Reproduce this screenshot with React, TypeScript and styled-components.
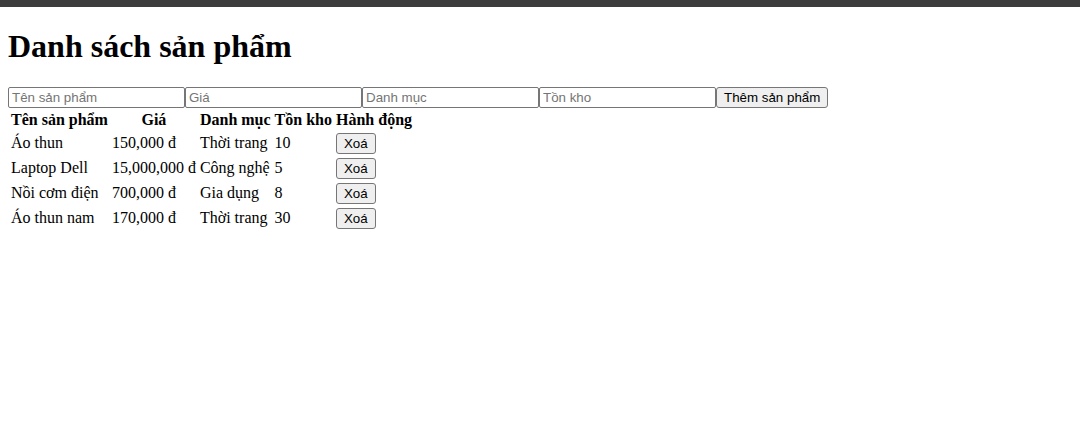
import React from "react";
import styled, { createGlobalStyle } from "styled-components";

const Global = createGlobalStyle`
  html, body { margin: 0; padding: 0; background: #ffffff; }
  body { font-family: "Liberation Serif", "Times New Roman", serif; font-size: 16px; color: #000; }
`;

const TopBar = styled.div`
  height: 7px;
  background: #3c3c3c;
`;

const Page = styled.div`
  padding: 0 8px 8px;
  display: flow-root;
`;

const Title = styled.h1`
  font-size: 32px;
  font-weight: bold;
  margin: 21.44px 0;
  line-height: normal;
`;

const Form = styled.div`
  display: flex;
  align-items: flex-start;
`;

const Field = styled.input`
  box-sizing: border-box;
  width: 177px;
  height: 21px;
  margin: 0;
  padding: 1px 3px;
  border: 1px solid #767676;
  border-radius: 2px;
  font-family: "Liberation Sans", Arial, sans-serif;
  font-size: 13.333px;
  color: #000;
  background: #fff;
  outline: none;
  &::placeholder { color: #757575; }
`;

const Button = styled.button`
  box-sizing: border-box;
  height: 21px;
  margin: 0;
  padding: 1px 7px;
  border: 1px solid #767676;
  border-radius: 3px;
  background: #efefef;
  font-family: "Liberation Sans", Arial, sans-serif;
  font-size: 13.333px;
  color: #000;
  line-height: normal;
  cursor: pointer;
`;

const Table = styled.table`
  border-collapse: separate;
  border-spacing: 2px;
  font-family: "Liberation Serif", "Times New Roman", serif;
  font-size: 16px;
`;

const Th = styled.th`
  padding: 1px;
  font-weight: bold;
  text-align: center;
  white-space: nowrap;
`;

const Td = styled.td`
  padding: 1px;
  text-align: left;
  white-space: nowrap;
  vertical-align: middle;
`;

const products = [
  { name: "Áo thun", price: 150000, category: "Thời trang", stock: 10 },
  { name: "Laptop Dell", price: 15000000, category: "Công nghệ", stock: 5 },
  { name: "Nồi cơm điện", price: 700000, category: "Gia dụng", stock: 8 },
  { name: "Áo thun nam", price: 170000, category: "Thời trang", stock: 30 },
];

const fmt = (n: number) => n.toLocaleString("en-US") + " đ";

export default function App() {
  return (
    <>
      <Global />
      <TopBar />
      <Page>
        <Title>Danh sách sản phẩm</Title>
        <Form>
          <Field placeholder="Tên sản phẩm" />
          <Field placeholder="Giá" />
          <Field placeholder="Danh mục" />
          <Field placeholder="Tồn kho" />
          <Button>Thêm sản phẩm</Button>
        </Form>
        <Table>
          <thead>
            <tr>
              <Th>Tên sản phẩm</Th>
              <Th>Giá</Th>
              <Th>Danh mục</Th>
              <Th>Tồn kho</Th>
              <Th>Hành động</Th>
            </tr>
          </thead>
          <tbody>
            {products.map((p) => (
              <tr key={p.name}>
                <Td>{p.name}</Td>
                <Td>{fmt(p.price)}</Td>
                <Td>{p.category}</Td>
                <Td>{p.stock}</Td>
                <Td>
                  <Button>Xoá</Button>
                </Td>
              </tr>
            ))}
          </tbody>
        </Table>
      </Page>
    </>
  );
}
